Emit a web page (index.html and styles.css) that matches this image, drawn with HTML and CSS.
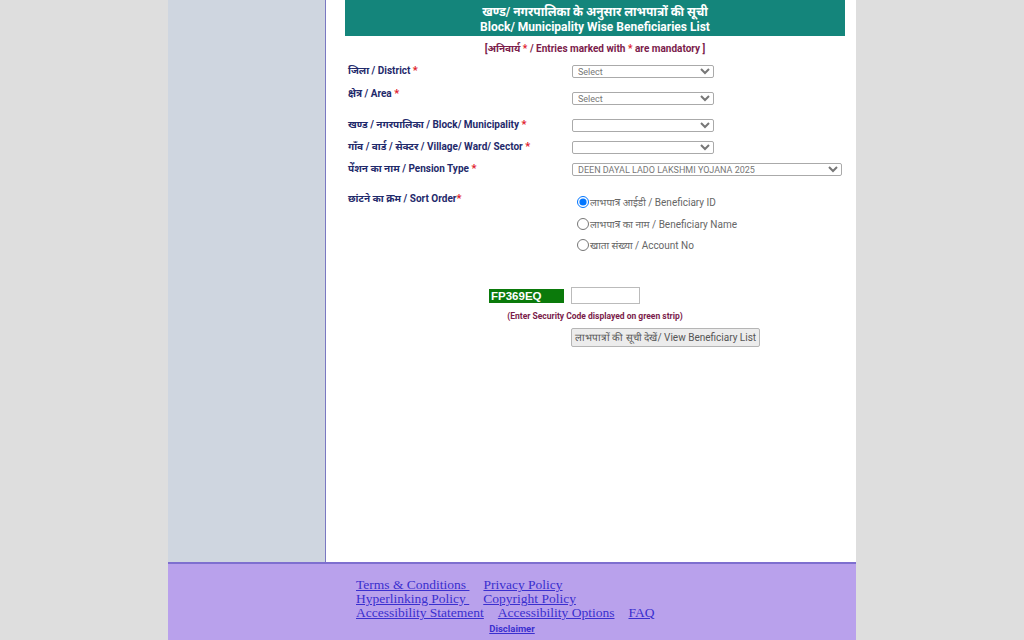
FILE: index.html
```html
<!DOCTYPE html>
<html lang="hi">
<head>
<meta charset="utf-8">
<title>Block/ Municipality Wise Beneficiaries List</title>
<link rel="stylesheet" href="styles.css">
</head>
<body>
<div class="page">
  <div class="body-row">
    <aside class="sidebar"></aside>
    <main class="main">
      <div class="title-box">
        <div>खण्ड/ नगरपालिका के अनुसार लाभपात्रों की सूची</div>
        <div>Block/ Municipality Wise Beneficiaries List</div>
      </div>
      <p class="mandatory">[अनिवार्य <span class="star">*</span> / Entries marked with <span class="star">*</span> are mandatory ]</p>
      <div class="form">
        <div class="row r-district">
          <label class="lbl">जिला / District <span class="star">*</span></label>
          <select class="sel"><option>Select</option></select>
        </div>
        <div class="row r-area">
          <label class="lbl">क्षेत्र / Area <span class="star">*</span></label>
          <select class="sel sel-low"><option>Select</option></select>
        </div>
        <div class="row r-block">
          <label class="lbl">खण्ड / नगरपालिका / Block/ Municipality <span class="star">*</span></label>
          <select class="sel"><option></option></select>
        </div>
        <div class="row r-village">
          <label class="lbl">गाँव / वार्ड / सेक्टर / Village/ Ward/ Sector <span class="star">*</span></label>
          <select class="sel"><option></option></select>
        </div>
        <div class="row r-pension">
          <label class="lbl">पेंशन का नाम / Pension Type <span class="star">*</span></label>
          <select class="sel sel-wide"><option>DEEN DAYAL LADO LAKSHMI YOJANA 2025</option></select>
        </div>
        <div class="row r-sort">
          <label class="lbl">छांटने का क्रम / Sort Order<span class="star">*</span></label>
          <div class="radios">
            <label class="radio"><input type="radio" name="s" checked><span>लाभपात्र आईडी / Beneficiary ID</span></label>
            <label class="radio"><input type="radio" name="s"><span>लाभपात्र का नाम / Beneficiary Name</span></label>
            <label class="radio"><input type="radio" name="s"><span>खाता संख्या / Account No</span></label>
          </div>
        </div>
      </div>
      <div class="captcha-row">
        <span class="captcha">FP369EQ</span>
        <input class="code" type="text">
      </div>
      <p class="hint">(Enter Security Code displayed on green strip)</p>
      <div class="btn-row"><button class="btn">लाभपात्रों की सूची देखें/ View Beneficiary List</button></div>
    </main>
  </div>
  <footer class="footer">
    <div class="links">
      <div><a href="#">Terms &amp; Conditions </a><a href="#">Privacy Policy </a></div>
      <div><a href="#">Hyperlinking Policy </a><a href="#">Copyright Policy </a></div>
      <div><a href="#">Accessibility Statement</a><a href="#">Accessibility Options</a><a href="#">FAQ</a></div>
    </div>
    <div class="disc"><a href="#">Disclaimer</a></div>
  </footer>
</div>
</body>
</html>
```
FILE: styles.css
```css
html, body { margin: 0; padding: 0; }
body {
  background: #dedede;
  font-family: Roboto, "Noto Sans", Arial, sans-serif;
  height: 640px;
  overflow: hidden;
}
.page {
  width: 688px;
  margin: 0 auto;
  display: flex;
  flex-direction: column;
  height: 640px;
}
.body-row {
  display: flex;
  height: 562px;
}
.sidebar {
  width: 157px;
  background: #cfd6e0;
  border-right: 1px solid #7a78c2;
}
.main {
  flex: 1;
  background: #fff;
  padding: 0 11px 0 19px;
}
.title-box {
  background: #14857b;
  color: #fff;
  font-weight: bold;
  font-size: 12px;
  text-align: center;
  height: 36px;
  display: flex;
  flex-direction: column;
  justify-content: center;
  line-height: 15px;
  padding-top: 3px;
  box-sizing: border-box;
}
.mandatory {
  margin: 6px 0 0;
  text-align: center;
  font-size: 10px;
  font-weight: bold;
  color: #7b1c4b;
  line-height: 14px;
}
.star { color: #e0202a; }
.form { margin-top: 8px; padding-left: 3px; }
.row {
  display: grid;
  grid-template-columns: 224px auto;
  align-items: start;
}
.lbl {
  font-size: 10px;
  font-weight: bold;
  color: #1f2a6b;
  line-height: 14px;
}
.lbl .star { font-size: 11px; }
.sel {
  width: 142px;
  height: 13px;
  font-size: 9px;
  font-family: Roboto, Arial, sans-serif;
  color: #777;
  border: 1px solid #aaa;
  border-radius: 2px;
  background: #fff;
  padding: 0 1px;
  margin-top: 1px;
}
.sel-low { margin-top: 5px; }
.sel-wide { width: 270px; }
.r-district { height: 23px; }
.r-area { height: 31px; }
.r-block { height: 22px; }
.r-village { height: 22px; }
.r-pension { height: 30px; }
.radios {
  display: flex;
  flex-direction: column;
  gap: 3.5px;
  padding-left: 5px;
  margin-top: 1px;
}
.radio {
  display: flex;
  align-items: center;
  font-size: 10px;
  color: #666;
  height: 18px;
}
.radio input {
  margin: 0 1px 0 0;
  width: 12px;
  height: 12px;
}
.captcha-row {
  display: flex;
  align-items: center;
  margin-top: 33px;
  padding-left: 144px;
  gap: 7px;
}
.captcha {
  display: inline-block;
  width: 75px;
  height: 14px;
  background: #0b7a0b;
  color: #fff;
  font-weight: bold;
  font-size: 11.5px;
  font-family: Arial, "Liberation Sans", sans-serif;
  line-height: 14px;
  padding-left: 2px;
  box-sizing: border-box;
}
.code {
  width: 69px;
  height: 17px;
  box-sizing: border-box;
  border: 1px solid #bbb;
  padding: 0;
}
.hint {
  margin: 7px 0 0;
  text-align: center;
  font-size: 8.5px;
  font-weight: bold;
  color: #7b1c4b;
}
.btn-row { padding-left: 226px; margin-top: 5px; }
.btn {
  height: 19px;
  font-size: 10px;
  font-family: Roboto, Arial, sans-serif;
  color: #555;
  background: #ececec;
  border: 1px solid #b5b5b5;
  border-radius: 2px;
  padding: 0 3px;
}
.footer {
  flex: 1;
  background: #b9a1ec;
  border-top: 2px solid #7e6fcf;
  padding-top: 14px;
  box-sizing: border-box;
}
.links {
  padding-left: 188px;
  font-family: "Liberation Serif", "DejaVu Serif", serif;
  font-size: 13.5px;
  line-height: 14px;
}
.links a {
  color: #3a2fcf;
  margin-right: 14px;
}
.links a:last-child { margin-right: 0; }
.disc {
  text-align: center;
  margin-top: 1px;
  line-height: 12px;
}
.disc a {
  color: #3a2fcf;
  font-size: 9.5px;
  font-weight: bold;
  font-family: Roboto, Arial, sans-serif;
}
```
